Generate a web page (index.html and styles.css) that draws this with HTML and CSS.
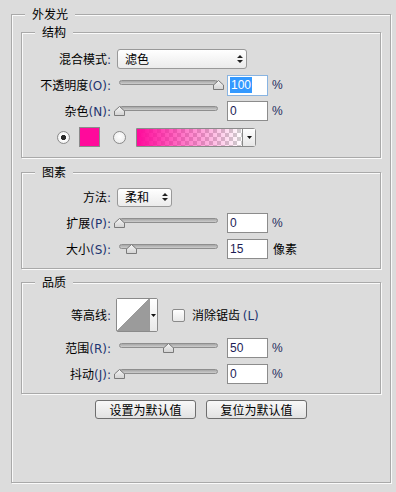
FILE: index.html
```html
<!DOCTYPE html>
<html lang="zh-CN">
<head>
<meta charset="utf-8">
<title>外发光</title>
<link rel="stylesheet" href="styles.css">
</head>
<body>
<div class="group outer">
  <div class="legend">外发光</div>

  <div class="group sub s1">
    <div class="legend">结构</div>
    <div class="row">
      <span class="lbl">混合模式<span class="lat">:</span></span>
      <div class="select w-blend"><span>滤色</span>
        <svg class="updown" width="6" height="8" viewBox="0 0 6 8"><path d="M3 0L6 3H0Z M0 5H6L3 8Z" fill="#222"/></svg>
      </div>
    </div>
    <div class="row">
      <span class="lbl">不透明度<span class="lat">(O):</span></span>
      <div class="slider"><div class="track"></div>
        <svg class="thumb" style="--v:100" width="11" height="10" viewBox="0 0 11 10"><defs><linearGradient id="tg1" x1="0" y1="0" x2="0" y2="1"><stop offset="0" stop-color="#f6f6f6"/><stop offset="1" stop-color="#d2d2d2"/></linearGradient></defs><path d="M5.5 0.5L10.5 5V9.5H0.5V5Z" fill="url(#tg1)" stroke="#7a7a7a"/></svg>
      </div>
      <div class="num focus"><span class="hl">100</span></div>
      <span class="unit">%</span>
    </div>
    <div class="row">
      <span class="lbl">杂色<span class="lat">(N):</span></span>
      <div class="slider"><div class="track"></div>
        <svg class="thumb" style="--v:0" width="11" height="10" viewBox="0 0 11 10"><path d="M5.5 0.5L10.5 5V9.5H0.5V5Z" fill="url(#tg1)" stroke="#7a7a7a"/></svg>
      </div>
      <div class="num">0</div>
      <span class="unit">%</span>
    </div>
    <div class="row colors">
      <div class="radio on"></div>
      <div class="swatch"></div>
      <div class="radio r2"></div>
      <div class="grad">
        <div class="grad-fill"></div>
        <div class="grad-btn"><svg width="5" height="3" viewBox="0 0 5 3"><path d="M0 0H5L2.5 3Z" fill="#111"/></svg></div>
      </div>
    </div>
  </div>

  <div class="group sub s2">
    <div class="legend">图素</div>
    <div class="row">
      <span class="lbl">方法<span class="lat">:</span></span>
      <div class="select w-method"><span>柔和</span>
        <svg class="updown" width="6" height="8" viewBox="0 0 6 8"><path d="M3 0L6 3H0Z M0 5H6L3 8Z" fill="#222"/></svg>
      </div>
    </div>
    <div class="row">
      <span class="lbl">扩展<span class="lat">(P):</span></span>
      <div class="slider"><div class="track"></div>
        <svg class="thumb" style="--v:0" width="11" height="10" viewBox="0 0 11 10"><path d="M5.5 0.5L10.5 5V9.5H0.5V5Z" fill="url(#tg1)" stroke="#7a7a7a"/></svg>
      </div>
      <div class="num">0</div>
      <span class="unit">%</span>
    </div>
    <div class="row">
      <span class="lbl">大小<span class="lat">(S):</span></span>
      <div class="slider"><div class="track"></div>
        <svg class="thumb" style="--v:13" width="11" height="10" viewBox="0 0 11 10"><path d="M5.5 0.5L10.5 5V9.5H0.5V5Z" fill="url(#tg1)" stroke="#7a7a7a"/></svg>
      </div>
      <div class="num">15</div>
      <span class="unit cjk">像素</span>
    </div>
  </div>

  <div class="group sub s3">
    <div class="legend">品质</div>
    <div class="row tall">
      <span class="lbl">等高线<span class="lat">:</span></span>
      <div class="contour">
        <div class="curve"></div>
        <div class="cdrop"><svg width="5" height="3" viewBox="0 0 5 3"><path d="M0 0H5L2.5 3Z" fill="#111"/></svg></div>
      </div>
      <div class="check"></div>
      <span class="check-lbl">消除锯齿 <span class="lat">(L)</span></span>
    </div>
    <div class="row">
      <span class="lbl">范围<span class="lat">(R):</span></span>
      <div class="slider"><div class="track"></div>
        <svg class="thumb" style="--v:50" width="11" height="10" viewBox="0 0 11 10"><path d="M5.5 0.5L10.5 5V9.5H0.5V5Z" fill="url(#tg1)" stroke="#7a7a7a"/></svg>
      </div>
      <div class="num">50</div>
      <span class="unit">%</span>
    </div>
    <div class="row">
      <span class="lbl">抖动<span class="lat">(J):</span></span>
      <div class="slider"><div class="track"></div>
        <svg class="thumb" style="--v:0" width="11" height="10" viewBox="0 0 11 10"><path d="M5.5 0.5L10.5 5V9.5H0.5V5Z" fill="url(#tg1)" stroke="#7a7a7a"/></svg>
      </div>
      <div class="num">0</div>
      <span class="unit">%</span>
    </div>
  </div>

  <div class="btns">
    <button class="btn" type="button">设置为默认值</button>
    <button class="btn" type="button">复位为默认值</button>
  </div>
</div>
</body>
</html>
```

FILE: styles.css
```css
html, body {
  margin: 0;
  padding: 0;
}
body {
  width: 396px;
  height: 492px;
  overflow: hidden;
  background: #dcdcdc;
  color: #000;
  font-family: "Noto Sans CJK SC", "Noto Sans", sans-serif;
  font-size: 12px;
  line-height: 16px;
}

.group {
  position: relative;
  box-sizing: border-box;
  border: 1px solid #a9a9a9;
  box-shadow: inset 1px 1px 0 #fafafa, 1px 1px 0 #fafafa;
}
.outer {
  margin: 14px 0 0 11px;
  width: 380px;
  height: 469px;
  padding: 17px 9px 0;
}
.legend {
  position: absolute;
  top: -9px;
  left: 13px;
  height: 16px;
  padding: 0 7px;
  background: #dcdcdc;
  white-space: nowrap;
}

.sub { width: 360px; }
.s1 { padding: 13px 0 7px; }
.s2 { margin-top: 14px; padding: 11px 0 6px; }
.s3 { margin-top: 13px; padding: 12px 0 6px; }

.row {
  display: flex;
  align-items: center;
  height: 26px;
}
.row.tall { height: 40px; }

.lbl {
  flex: none;
  width: 89px;
  margin-right: 3px;
  text-align: right;
  white-space: nowrap;
}
.lat {
  font-family: "DejaVu Sans", sans-serif;
  font-size: 12px;
  color: #1e3470;
}

.select {
  flex: none;
  margin-left: 3px;
  box-sizing: border-box;
  height: 20px;
  border: 1px solid #999;
  border-radius: 3px;
  background: linear-gradient(#ffffff, #ebebeb);
  display: flex;
  align-items: center;
  justify-content: space-between;
  padding: 0 3px 0 7px;
}
.w-blend { width: 130px; }
.w-method { width: 55px; height: 19px; }

.slider {
  position: relative;
  flex: none;
  width: 110px;
  height: 20px;
}
.track {
  position: absolute;
  left: 5px;
  top: 5px;
  width: 99px;
  height: 5px;
  box-sizing: border-box;
  border: 1px solid #8e8e8e;
  border-radius: 3px;
  background: linear-gradient(#a6a6a6, #cdcdcd);
}
.thumb {
  position: absolute;
  top: 5px;
  left: calc(var(--v) * 0.99px - 0.5px);
}

.num {
  flex: none;
  margin-left: 3px;
  box-sizing: border-box;
  width: 41px;
  height: 20px;
  border: 1px solid #8c8c8c;
  background: #fff;
  padding-left: 2px;
  font-family: "Liberation Sans", sans-serif;
  font-size: 12px;
  line-height: 18px;
  color: #1c1c55;
}
.num.focus {
  height: 21px;
  border-color: #88b4e2;
  line-height: 19px;
}
.hl {
  display: inline-block;
  background: #3399ff;
  color: #fff;
  padding: 0 1px;
  line-height: 16px;
}
.unit {
  margin-left: 4px;
  font-family: "Liberation Sans", sans-serif;
  font-size: 12px;
  color: #1e2c5c;
}
.unit.cjk {
  margin-left: 5px;
  font-family: "Noto Sans CJK SC", sans-serif;
  color: #000;
}

.colors { padding-left: 35px; }
.radio {
  flex: none;
  box-sizing: border-box;
  width: 13px;
  height: 13px;
  border: 1px solid #8a8a8a;
  border-radius: 50%;
  background: radial-gradient(circle at 50% 40%, #ffffff, #e6e6e6);
}
.radio.on {
  background: radial-gradient(circle, #2a2a2a 0 2.4px, #ffffff 2.9px, #e6e6e6);
}
.radio.r2 { margin-left: 13px; }
.swatch {
  flex: none;
  margin-left: 9px;
  box-sizing: border-box;
  width: 21px;
  height: 20px;
  border: 1px solid #8a8a8a;
  background: #ff0a9b;
}
.grad {
  flex: none;
  margin-left: 10px;
  box-sizing: border-box;
  width: 120px;
  height: 19px;
  border: 1px solid #8a8a8a;
  border-radius: 0 3px 3px 0;
  display: flex;
}
.grad-fill {
  flex: 1;
  background:
    linear-gradient(to right, #ff0a9b, rgba(255, 10, 155, 0.45) 55%, rgba(255, 10, 155, 0)),
    repeating-conic-gradient(#cfcfcf 0 25%, #ffffff 0 50%) 0 0 / 8px 8px;
}
.grad-btn {
  flex: none;
  width: 12px;
  border-left: 1px solid #8a8a8a;
  background: linear-gradient(#ffffff, #e6e6e6);
  display: flex;
  align-items: center;
  justify-content: center;
}

.contour {
  flex: none;
  margin-left: 2px;
  box-sizing: border-box;
  height: 34px;
  border: 1px solid #8a8a8a;
  border-radius: 2px;
  background: #fff;
  display: flex;
}
.curve {
  width: 32px;
  background: linear-gradient(to top left, #9b9b9b 50%, #ffffff 50%);
  border-right: 1px solid #9a9a9a;
}
.cdrop {
  width: 7px;
  display: flex;
  align-items: center;
  justify-content: center;
  background: linear-gradient(#ffffff, #e8e8e8);
}
.check {
  flex: none;
  margin-left: 14px;
  box-sizing: border-box;
  width: 13px;
  height: 13px;
  border: 1px solid #8a8a8a;
  border-radius: 2px;
  background: linear-gradient(#ffffff, #e8e8e8);
}
.check-lbl {
  margin-left: 7px;
  white-space: nowrap;
}

.btns {
  display: flex;
  justify-content: center;
  gap: 10px;
  margin-top: 6px;
}
.btn {
  box-sizing: border-box;
  width: 101px;
  height: 19px;
  margin: 0;
  padding: 0;
  border: 1px solid #6e6e6e;
  border-radius: 3px;
  background: linear-gradient(#f8f8f8, #e2e2e2);
  font-family: "Noto Sans CJK SC", sans-serif;
  font-size: 12px;
  line-height: 16px;
  color: #000;
  display: flex;
  align-items: center;
  justify-content: center;
}
```
